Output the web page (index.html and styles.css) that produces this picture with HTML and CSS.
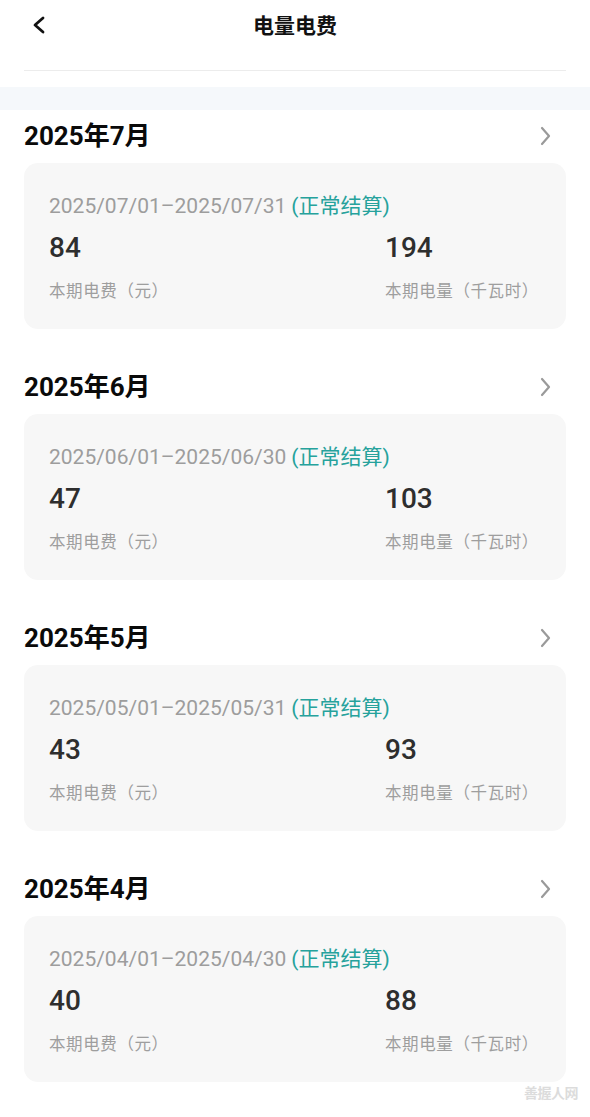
FILE: index.html
```html
<!DOCTYPE html>
<html lang="zh-CN">
<head>
<meta charset="utf-8">
<title>电量电费</title>
<link rel="stylesheet" href="styles.css">
</head>
<body>
<div class="page">
  <header class="topbar">
    <span class="back">
      <svg width="16" height="20" viewBox="0 0 16 20"><path d="M12 3 L4 10 L12 17" fill="none" stroke="#111" stroke-width="2.8" stroke-linecap="round" stroke-linejoin="round"/></svg>
    </span>
    <h1 class="title">电量电费</h1>
  </header>
  <div class="divider"></div>
  <div class="band"></div>

  <section class="month">
    <div class="month-head">
      <h2 class="month-title">2025年7月</h2>
      <svg class="chev" width="14" height="20" viewBox="0 0 14 20"><path d="M3 2 L10 10 L3 18" fill="none" stroke="#9a9a9a" stroke-width="2.2" stroke-linecap="round" stroke-linejoin="round"/></svg>
    </div>
    <div class="card">
      <div class="period">2025/07/01–2025/07/31<span class="status">(正常结算)</span></div>
      <div class="stats">
        <div class="stat"><div class="num">84</div><div class="label">本期电费（元）</div></div>
        <div class="stat"><div class="num">194</div><div class="label">本期电量（千瓦时）</div></div>
      </div>
    </div>
  </section>

  <section class="month">
    <div class="month-head">
      <h2 class="month-title">2025年6月</h2>
      <svg class="chev" width="14" height="20" viewBox="0 0 14 20"><path d="M3 2 L10 10 L3 18" fill="none" stroke="#9a9a9a" stroke-width="2.2" stroke-linecap="round" stroke-linejoin="round"/></svg>
    </div>
    <div class="card">
      <div class="period">2025/06/01–2025/06/30<span class="status">(正常结算)</span></div>
      <div class="stats">
        <div class="stat"><div class="num">47</div><div class="label">本期电费（元）</div></div>
        <div class="stat"><div class="num">103</div><div class="label">本期电量（千瓦时）</div></div>
      </div>
    </div>
  </section>

  <section class="month">
    <div class="month-head">
      <h2 class="month-title">2025年5月</h2>
      <svg class="chev" width="14" height="20" viewBox="0 0 14 20"><path d="M3 2 L10 10 L3 18" fill="none" stroke="#9a9a9a" stroke-width="2.2" stroke-linecap="round" stroke-linejoin="round"/></svg>
    </div>
    <div class="card">
      <div class="period">2025/05/01–2025/05/31<span class="status">(正常结算)</span></div>
      <div class="stats">
        <div class="stat"><div class="num">43</div><div class="label">本期电费（元）</div></div>
        <div class="stat"><div class="num">93</div><div class="label">本期电量（千瓦时）</div></div>
      </div>
    </div>
  </section>

  <section class="month">
    <div class="month-head">
      <h2 class="month-title">2025年4月</h2>
      <svg class="chev" width="14" height="20" viewBox="0 0 14 20"><path d="M3 2 L10 10 L3 18" fill="none" stroke="#9a9a9a" stroke-width="2.2" stroke-linecap="round" stroke-linejoin="round"/></svg>
    </div>
    <div class="card">
      <div class="period">2025/04/01–2025/04/30<span class="status">(正常结算)</span></div>
      <div class="stats">
        <div class="stat"><div class="num">40</div><div class="label">本期电费（元）</div></div>
        <div class="stat"><div class="num">88</div><div class="label">本期电量（千瓦时）</div></div>
      </div>
    </div>
  </section>

  <div class="watermark">善握人网</div>
</div>
</body>
</html>
```

FILE: styles.css
```css
* { box-sizing: border-box; }
html, body { margin: 0; padding: 0; background: #fff; }
body {
  font-family: "Roboto", "Noto Sans CJK SC", sans-serif;
  color: #111;
}
.page {
  position: relative;
  width: 590px;
  min-height: 1117px;
}
.topbar {
  height: 48px;
  display: flex;
  align-items: center;
  justify-content: center;
  position: relative;
}
.back {
  position: absolute;
  left: 31px;
  top: 15px;
  display: flex;
}
.title {
  margin: 0;
  font-family: "Noto Sans CJK SC", sans-serif;
  font-size: 21px;
  font-weight: 700;
  line-height: 28px;
  color: #111;
}
.divider {
  margin: 22px 24px 0;
  height: 1px;
  background: #ececec;
}
.band {
  margin-top: 16px;
  height: 23px;
  background: #f5f8fb;
}
.month {
  padding: 8px 24px 0;
}
.month + .month {
  padding-top: 40px;
}
.month-head {
  height: 36px;
  display: flex;
  align-items: center;
  justify-content: space-between;
  padding-right: 13px;
}
.month-title {
  margin: 0;
  font-family: "Roboto", "Noto Sans CJK SC", sans-serif;
  font-size: 26px;
  font-weight: 700;
  line-height: 36px;
  color: #0a0a0a;
}
.card {
  margin-top: 9px;
  background: #f7f7f7;
  border-radius: 14px;
  padding: 28px 25px 28px;
}
.period {
  font-size: 21px;
  line-height: 30px;
  color: #9d9d9d;
  white-space: nowrap;
}
.status {
  margin-left: 5px;
  font-size: 21px;
  color: #26a29c;
}
.stats {
  display: grid;
  grid-template-columns: 336px 1fr;
  margin-top: 9px;
}
.num {
  font-size: 28px;
  font-weight: 500;
  line-height: 36px;
  color: #2e2e2e;
}
.label {
  margin-top: 13px;
  font-family: "Noto Sans CJK SC", sans-serif;
  font-size: 16.5px;
  letter-spacing: 0.6px;
  line-height: 22px;
  color: #9e9e9e;
  white-space: nowrap;
}
.watermark {
  position: absolute;
  right: 12px;
  top: 1082px;
  font-family: "Noto Sans CJK SC", sans-serif;
  font-size: 14px;
  font-weight: 700;
  color: #dcdcdc;
  letter-spacing: -0.5px;
}
```
